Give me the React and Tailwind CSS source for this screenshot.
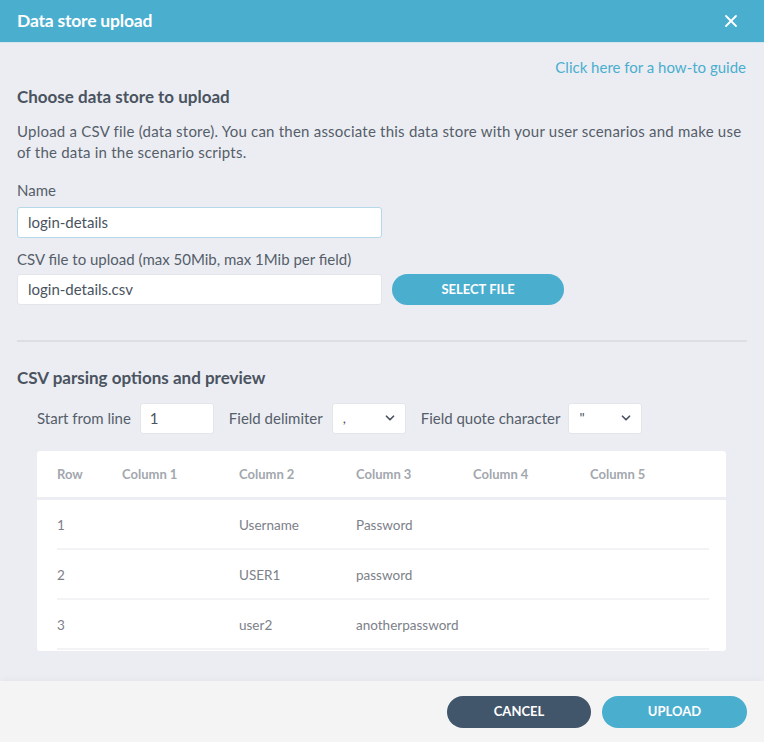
import React from "react";
import { X, ChevronDown } from "lucide-react";

const rows = [
  ["1", "", "Username", "Password", "", ""],
  ["2", "", "USER1", "password", "", ""],
  ["3", "", "user2", "anotherpassword", "", ""],
];

const Select = ({ value }) => (
  <div className="flex items-center justify-between w-[74px] h-[31px] bg-white rounded-[3px] border border-[#e3e5ea] pl-[10px] pr-[8px] text-[#4a5360]">
    <span className="text-[14px] leading-none">{value}</span>
    <ChevronDown className="w-[14px] h-[14px] text-[#4a5360]" strokeWidth={3} />
  </div>
);

export default function App() {
  return (
    <div className="w-[764px] h-[742px] flex flex-col bg-[#ecedf2] font-['Lato',sans-serif] text-[#4f5865]">
      {/* Header */}
      <div className="h-[43px] bg-[#4aaecf] flex items-center justify-between pl-[17px] pr-[23px] border-b border-[#d6e6ee]">
        <h1 className="text-white font-bold text-[17.5px] tracking-[-0.2px]">Data store upload</h1>
        <X className="w-[20px] h-[20px] text-white" strokeWidth={2.2} />
      </div>

      {/* Body */}
      <div className="flex-1 px-[17px] pt-[13px]">
        <div className="flex justify-end pr-[1px]">
          <a className="text-[#4aaecf] text-[15px]">Click here for a how-to guide</a>
        </div>
        <h2 className="font-bold text-[17px] text-[#4a5360] mt-[5px]">Choose data store to upload</h2>
        <p className="text-[15px] leading-[21px] tracking-[0.22px] mt-[12px] text-[#555e6a]">
          Upload a CSV file (data store). You can then associate this data store with your user scenarios and make use of the data in the scenario scripts.
        </p>

        <label className="block text-[15px] mt-[16px] text-[#555e6a]">Name</label>
        <div className="mt-[5px] w-[365px] h-[31px] bg-white rounded-[3px] border border-[#b5d9e8] flex items-center px-[10px] text-[15px] text-[#4a5360]">
          login-details
        </div>

        <label className="block text-[15px] mt-[10px] text-[#555e6a]">CSV file to upload (max 50Mib, max 1Mib per field)</label>
        <div className="mt-[4px] flex items-center gap-[10px]">
          <div className="w-[365px] h-[31px] bg-white rounded-[3px] border border-[#e3e5ea] flex items-center px-[10px] text-[15px] text-[#4a5360]">
            login-details.csv
          </div>
          <button className="w-[172px] h-[31px] rounded-full bg-[#4aaecf] text-white font-bold text-[13px]">SELECT FILE</button>
        </div>

        <div className="mt-[35px] h-[2px] bg-[#dddee2]" />

        <h2 className="font-bold text-[17px] text-[#4a5360] mt-[23px]">CSV parsing options and preview</h2>

        <div className="mt-[12px] pl-[20px] flex items-center text-[15px] text-[#555e6a]">
          <span>Start from line</span>
          <div className="ml-[9px] w-[74px] h-[31px] bg-white rounded-[3px] border border-[#e3e5ea] flex items-center px-[9px] text-[#4a5360]">1</div>
          <span className="ml-[15px]">Field delimiter</span>
          <div className="ml-[9px]"><Select value="," /></div>
          <span className="ml-[15px]">Field quote character</span>
          <div className="ml-[8px]"><Select value={'"'} /></div>
        </div>

        <div className="mt-[17px] ml-[20px] w-[689px] h-[200px] bg-white rounded-[3px]">
          <div className="flex items-center h-[49px] pl-[20px] border-b-[3px] border-[#eceef3] text-[13px] font-bold text-[#a3a7ae]">
            <div className="w-[65px] pt-[3px]">Row</div>
            <div className="w-[117px] pt-[3px]">Column 1</div>
            <div className="w-[117px] pt-[3px]">Column 2</div>
            <div className="w-[117px] pt-[3px]">Column 3</div>
            <div className="w-[117px] pt-[3px]">Column 4</div>
            <div className="w-[117px] pt-[3px]">Column 5</div>
          </div>
          <div className="ml-[20px] mr-[17px]">
            {rows.map((r) => (
              <div key={r[0]} className="flex items-center h-[50px] pt-[3px] border-b-2 border-[#f3f3f6] text-[13.5px] text-[#7c8189]">
                <div className="w-[65px]">{r[0]}</div>
                <div className="w-[117px]">{r[1]}</div>
                <div className="w-[117px]">{r[2]}</div>
                <div className="w-[117px]">{r[3]}</div>
                <div className="w-[117px]">{r[4]}</div>
                <div className="w-[117px]">{r[5]}</div>
              </div>
            ))}
          </div>
        </div>
      </div>

      {/* Footer */}
      <div className="h-[61px] bg-[#f4f4f4] shadow-[0_-4px_6px_-2px_rgba(0,0,0,0.03)] flex items-center justify-end gap-[11px] pr-[17px]">
        <button className="w-[144px] h-[32px] rounded-full bg-[#42566b] text-white font-bold text-[13px]">CANCEL</button>
        <button className="w-[145px] h-[32px] rounded-full bg-[#4aaecf] text-white font-bold text-[13px]">UPLOAD</button>
      </div>
    </div>
  );
}
